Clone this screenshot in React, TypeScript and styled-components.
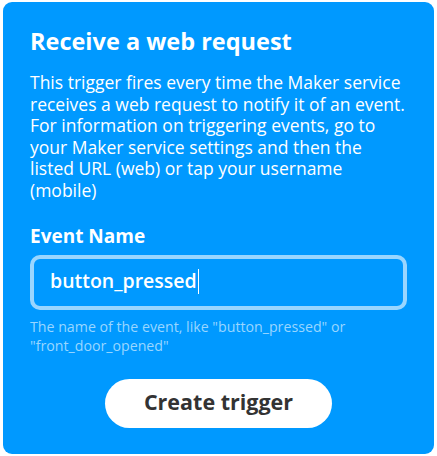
import React from "react";
import styled, { createGlobalStyle } from "styled-components";

const Global = createGlobalStyle`
  html, body { margin: 0; padding: 0; background: #ffffff; }
  body { font-family: "Open Sans", "Noto Sans", sans-serif; -webkit-font-smoothing: antialiased; }
  * { box-sizing: border-box; }
`;

const Card = styled.section`
  margin: 2px 3px;
  width: 431px;
  height: 452px;
  background: #0099ff;
  border-radius: 9px;
  padding: 24px 27px 0 27px;
  display: flex;
  flex-direction: column;
  color: #ffffff;
`;

const Title = styled.h1`
  margin: 0;
  font-size: 23.5px;
  font-weight: 700;
  line-height: 30px;
`;

const Description = styled.p`
  margin: 16px 0 0 0;
  font-size: 17.5px;
  line-height: 21.6px;
  font-weight: 400;
`;

const Label = styled.label`
  margin-top: 21px;
  font-size: 19px;
  font-weight: 700;
  line-height: 26px;
`;

const Field = styled.div`
  margin-top: 6px;
  width: 377px;
  height: 55px;
  border: 4px solid #99d6ff;
  border-radius: 10px;
  padding: 0 16px 4px 16px;
  display: flex;
  align-items: center;
  font-size: 19.5px;
  font-weight: 600;
`;

const Caret = styled.span`
  display: inline-block;
  width: 1.5px;
  height: 25px;
  margin-left: 1px;
  margin-top: 2px;
  background: #ffffff;
`;

const Help = styled.p`
  margin: 7px 0 0 0;
  font-size: 14.2px;
  line-height: 19px;
  color: #99d6ff;
`;

const Actions = styled.div`
  display: flex;
  justify-content: center;
  margin-top: 24px;
`;

const Button = styled.button`
  width: 227px;
  height: 49px;
  border: none;
  border-radius: 25px;
  background: #ffffff;
  color: #333333;
  padding: 0 0 3px 0;
  font-family: "Open Sans", "Noto Sans", sans-serif;
  font-size: 21.5px;
  font-weight: 700;
  cursor: pointer;
`;

export default function App() {
  return (
    <>
      <Global />
      <Card>
        <Title>Receive a web request</Title>
        <Description>
          This trigger fires every time the Maker service receives a web request to notify it of an event.
          For information on triggering events, go to your Maker service settings and then the listed URL
          (web) or tap your username (mobile)
        </Description>
        <Label>Event Name</Label>
        <Field>
          button_pressed
          <Caret />
        </Field>
        <Help>The name of the event, like "button_pressed" or "front_door_opened"</Help>
        <Actions>
          <Button>Create trigger</Button>
        </Actions>
      </Card>
    </>
  );
}
